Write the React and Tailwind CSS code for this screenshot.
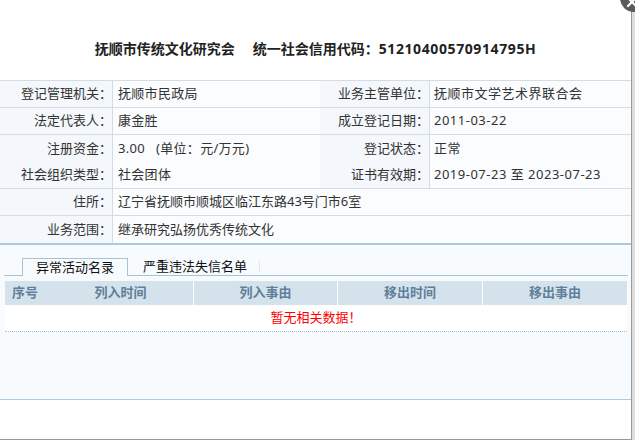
import React from "react";

const font = { fontFamily: '"Noto Sans", "Noto Sans CJK SC", sans-serif' };

const rows = [
  { l1: "登记管理机关：", v1: "抚顺市民政局", l2: "业务主管单位：", v2: "抚顺市文学艺术界联合会", line: true },
  { l1: "法定代表人：", v1: "康金胜", l2: "成立登记日期：", v2: "2011-03-22", line: true },
  { l1: "注册资金：", v1: "3.00   (单位：元/万元)", l2: "登记状态：", v2: "正常", line: false },
  { l1: "社会组织类型：", v1: "社会团体", l2: "证书有效期：", v2: "2019-07-23 至 2023-07-23", line: true },
];

const wide = [
  { l: "住所：", v: "辽宁省抚顺市顺城区临江东路43号门市6室" },
  { l: "业务范围：", v: "继承研究弘扬优秀传统文化" },
];

const heads = ["列入时间", "列入事由", "移出时间", "移出事由"];

export default function App() {
  return (
    <div className="relative w-[635px] h-[440px] overflow-hidden bg-white text-[13px] text-[#333]" style={font}>
      <div className="flex h-full">
        <div className="w-[631px] flex flex-col border-b border-[#9a9a9a]">
          <div className="h-[80px] pt-[16px] flex items-center justify-center text-[14px] font-bold text-[#222]">
            <span>抚顺市传统文化研究会</span>
            <span className="ml-[18px]">统一社会信用代码：</span>
            <span className="tracking-[0.6px]">51210400570914795H</span>
          </div>

          <div className="border-t border-[#d3dbe3]">
            {rows.map((r) => (
              <div
                key={r.l1}
                className={`grid grid-cols-[113px_207px_110px_1fr] h-[27px] ${r.line ? "border-b border-[#d3dbe3]" : ""}`}
              >
                <div className="flex items-center justify-end bg-[#f4f7fb] border-r border-[#d3dbe3]">{r.l1}</div>
                <div className="flex items-center pl-[5px] bg-[#fafcfe] whitespace-pre tracking-[0.3px]">{r.v1}</div>
                <div className="flex items-center justify-end bg-[#f4f7fb] border-r border-[#d3dbe3]">{r.l2}</div>
                <div className="flex items-center pl-[4px] bg-[#fafcfe] tracking-[0.5px]">{r.v2}</div>
              </div>
            ))}
            {wide.map((r) => (
              <div key={r.l} className="grid grid-cols-[113px_1fr] h-[27px] border-b border-[#d3dbe3] last:border-b-0">
                <div className="flex items-center justify-end bg-[#f4f7fb] border-r border-[#d3dbe3]">{r.l}</div>
                <div className="flex items-center pl-[5px] bg-[#fafcfe]">{r.v}</div>
              </div>
            ))}
          </div>

          <div className="h-[157px] bg-[#f7fbfe] border-t-2 border-b border-[#a8cbe3] pt-[13px]">
            <div className="flex items-end ml-[4px] mr-[3px] border-b border-[#a9c3d2] h-[18px]">
              <div className="ml-[18px] w-[106px] h-[18px] -mb-px border border-b-0 border-[#a9c3d2] bg-[#f7fbfe] flex items-center justify-center text-[#111]">
                异常活动名录
              </div>
              <div className="h-[17px] pl-[15px] pr-[12px] flex items-center text-[#111]">严重违法失信名单</div>
              <div className="w-px h-[11px] mb-[3px] bg-[#dfe6ea]" />
            </div>

            <div className="ml-[5px] w-[622px] mt-[5px]">
              <div className="grid grid-cols-[43px_145px_144px_145px_145px] h-[24px] bg-[#d4e3eb] font-bold text-[#5f7f9c]">
                <div className="flex items-center pl-[7px]">序号</div>
                {heads.map((h, i) => (
                  <div key={h} className={`flex items-center justify-center ${i > 0 ? "border-l border-white" : ""}`}>
                    {h}
                  </div>
                ))}
              </div>
              <div className="h-[27px] bg-white border-b border-dotted border-[#a9bdd6] flex items-center justify-center text-[#ff0000]">
                暂无相关数据！
              </div>
            </div>
          </div>
          <div className="flex-1 bg-white" />
        </div>
        <div className="w-[4px] h-full border-l border-[#9a9a9a] bg-[#dedede]" />
      </div>

      <div className="absolute left-[620px] top-[-16px] w-[28px] h-[28px] rounded-full bg-[#5b5b5b] flex items-center justify-center">
        <svg width="12" height="12" viewBox="0 0 12 12" className="mt-[8px] -ml-[4px]">
          <path d="M2 2 L10 10 M10 2 L2 10" stroke="#fff" strokeWidth="2.2" strokeLinecap="round" />
        </svg>
      </div>
    </div>
  );
}
